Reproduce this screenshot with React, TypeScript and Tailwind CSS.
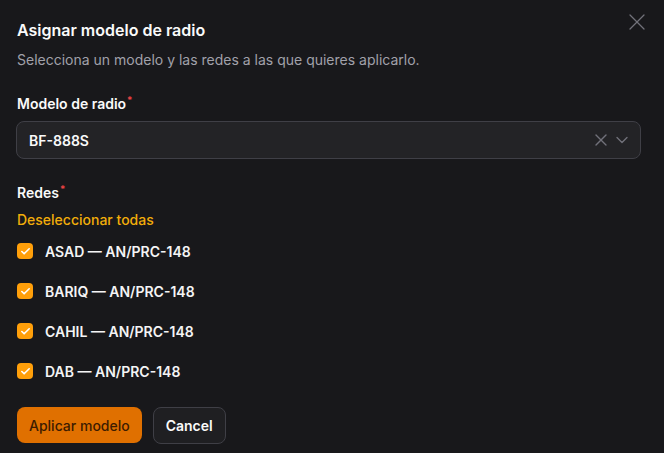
import { X, ChevronDown, Check } from "lucide-react"

const redes = ["ASAD", "BARIQ", "CAHIL", "DAB"]

function Label({ children }: { children: string }) {
  return (
    <div className="text-[14px] font-semibold leading-[20px] text-[#fafafa]">
      {children}
      <span className="relative -top-[5px] ml-[1px] text-[10px] leading-none text-[#ef4444]">*</span>
    </div>
  )
}

export default function App() {
  return (
    <div
      className="w-[664px] h-[453px] bg-[#18181b] text-white relative overflow-hidden"
      style={{ fontFamily: "Inter, 'Noto Sans', sans-serif" }}
    >
      <button className="absolute right-[13px] top-[8px] text-[#71717a]">
        <X size={28} strokeWidth={1.1} />
      </button>
      <div className="px-[17px] pt-[20px]">
        <h2 className="text-[16px] font-semibold leading-[20px] text-[#fafafa]">Asignar modelo de radio</h2>
        <p className="mt-[10px] text-[14px] leading-[20px] text-[#a1a1aa]">
          Selecciona un modelo y las redes a las que quieres aplicarlo.
        </p>

        <div className="mt-[24px]">
          <Label>Modelo de radio</Label>
          <div className="mt-[7px] mr-[6px] -ml-[1px] h-[38px] rounded-[8px] border border-[#3f3f46] bg-[#232326] flex items-center pl-[12px] pr-[8px]">
            <span className="flex-1 text-[14px] font-semibold text-[#fafafa]">BF-888S</span>
            <X size={20} strokeWidth={1.6} className="text-[#71717a]" />
            <ChevronDown size={20} strokeWidth={1.6} className="text-[#71717a] ml-[1px]" />
          </div>
        </div>

        <div className="mt-[24px]">
          <Label>Redes</Label>
          <div className="mt-[7px] text-[14px] font-medium leading-[20px] text-[#f2ad0a]">Deseleccionar todas</div>
          <div className="mt-[13px] flex flex-col gap-[24px]">
            {redes.map((r) => (
              <div key={r} className="flex items-center gap-[12px] h-[16px]">
                <span className="w-[16px] h-[16px] rounded-[4px] bg-[#ff9f0a] flex items-center justify-center">
                  <Check size={11} strokeWidth={3.5} className="text-white" />
                </span>
                <span className="text-[14px] font-semibold text-[#f4f4f5]">{r} — AN/PRC-148</span>
              </div>
            ))}
          </div>
        </div>

        <div className="mt-[28px] flex gap-[11px]">
          <button className="h-[36px] px-[12px] rounded-[8px] bg-[#e07000] text-[14px] font-medium text-[#3d1c00]">
            Aplicar modelo
          </button>
          <button className="h-[37px] px-[12px] rounded-[8px] border border-[#3f3f46] bg-[#1f1f22] text-[14px] font-semibold text-[#fafafa]">
            Cancel
          </button>
        </div>
      </div>
    </div>
  )
}
